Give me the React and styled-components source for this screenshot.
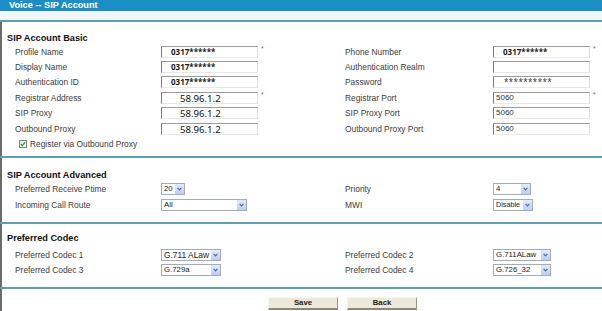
import React from "react";
import styled, { createGlobalStyle } from "styled-components";

const GlobalStyle = createGlobalStyle`
  html, body {
    margin: 0;
    padding: 0;
    background: #ffffff;
  }
  body {
    font-family: "Liberation Sans", Arial, sans-serif;
    overflow: hidden;
  }
`;

const Page = styled.div`
  width: 602px;
  height: 311px;
  overflow: hidden;
  background: #ffffff;
`;

const TitleBar = styled.div`
  height: 11px;
  background: #1c8ec6;
  color: #ffffff;
  font-weight: bold;
  font-size: 9.2px;
  line-height: 11px;
  padding-left: 9px;
`;

const TitleBand = styled.div`
  height: 9px;
  background: #f1f8fb;
`;

const Divider = styled.div`
  height: 2px;
  background: #5d9eb0;
`;

const Section = styled.section`
  border-left: 2px solid #6b6b6b;
  padding: ${(p) => p.$pt}px 0 ${(p) => p.$pb}px 5px;
`;

const SectionTitle = styled.h3`
  margin: 0 0 ${(p) => p.$gap || 0}px;
  font-size: 9.2px;
  line-height: 12px;
  font-weight: bold;
  color: #111111;
`;

const Fields = styled.div`
  display: grid;
  grid-template-columns: 146px 184px 148px 1fr;
  grid-auto-rows: ${(p) => p.$row}px;
  align-items: center;
  margin-left: 8px;
`;

const Label = styled.div`
  font-size: 8.4px;
  color: #3d3d3d;
  white-space: nowrap;
`;

const Field = styled.div`
  display: flex;
  align-items: center;
  gap: 3px;
`;

const fonts = {
  id: `font-family: "Noto Sans", sans-serif; font-weight: bold; font-size: 8px; padding-left: 9px; color: #1a1a1a;`,
  ip: `font-family: "Noto Sans", sans-serif; font-size: 9.6px; line-height: 11px; padding-left: 18px; color: #111;`,
  port: `font-family: "Liberation Sans", Arial, sans-serif; font-size: 8px; padding-left: 2px; color: #333;`,
  secret: `font-family: "Noto Sans", sans-serif; font-size: 8px; padding-left: 10px; letter-spacing: 0.4px; color: #333;`,
};

const TextBox = styled.div`
  width: 97px;
  height: 12px;
  box-sizing: border-box;
  border-style: solid;
  border-width: 1px;
  border-color: #9c9c9c #dedede #e8e8e8 #7c7c7c;
  background: #ffffff;
  line-height: 10px;
  white-space: nowrap;
  overflow: hidden;
  ${(p) => fonts[p.$kind || "port"]}
`;

const Required = styled.span`
  color: #c0504d;
  font-size: 7px;
  line-height: 7px;
  align-self: flex-start;
  margin-top: -1px;
`;

const CheckRow = styled.div`
  grid-column: 1 / -1;
  display: flex;
  align-items: center;
  gap: 3px;
  padding-left: 4px;
  font-size: 8.4px;
  color: #3d3d3d;
`;

const CheckBox = styled.span`
  width: 8px;
  height: 8px;
  box-sizing: border-box;
  border: 1px solid #7a8a99;
  background: linear-gradient(135deg, #e6e6e0, #ffffff);
  display: flex;
  align-items: center;
  justify-content: center;
`;

const Select = styled.div`
  width: ${(p) => p.$w}px;
  height: 12px;
  box-sizing: border-box;
  border: 1px solid #a3adb8;
  background: #ffffff;
  display: flex;
`;

const SelectText = styled.span`
  flex: 1;
  padding-left: 2px;
  font-size: ${(p) => p.$size || 7.8}px;
  line-height: 10px;
  color: #222222;
  white-space: nowrap;
  overflow: hidden;
`;

const SelectArrow = styled.span`
  width: 9px;
  flex: none;
  border-left: 1px solid #ffffff;
  background: linear-gradient(#e4ebfd, #bccdf5);
  display: flex;
  align-items: center;
  justify-content: center;
`;

const ButtonRow = styled.div`
  display: flex;
  gap: 9px;
  padding-left: 261px;
`;

const Button = styled.button`
  width: 70px;
  height: 13px;
  padding: 0;
  box-sizing: border-box;
  background: #ece9d8;
  border-style: solid;
  border-width: 1px 1px 2px 1px;
  border-color: #f7f6ef #9a9788 #8c897b #f7f6ef;
  font-family: "Liberation Sans", Arial, sans-serif;
  font-weight: bold;
  font-size: 7.8px;
  line-height: 10px;
  color: #222222;
`;

function Chevron() {
  return (
    <svg width="5" height="4" viewBox="0 0 5 4">
      <path d="M0.6 0.8 L2.5 2.8 L4.4 0.8" fill="none" stroke="#4a68a6" strokeWidth="1.2" />
    </svg>
  );
}

function Dropdown({ w, value, size }) {
  return (
    <Select $w={w}>
      <SelectText $size={size}>{value}</SelectText>
      <SelectArrow>
        <Chevron />
      </SelectArrow>
    </Select>
  );
}

function Input({ kind, value, required }) {
  return (
    <Field>
      <TextBox $kind={kind}>{value}</TextBox>
      {required && <Required>*</Required>}
    </Field>
  );
}

const basicRows = [
  ["Profile Name", { kind: "id", value: "0317******", required: true }, "Phone Number", { kind: "id", value: "0317******", required: true }],
  ["Display Name", { kind: "id", value: "0317******" }, "Authentication Realm", { kind: "port", value: "" }],
  ["Authentication ID", { kind: "id", value: "0317******" }, "Password", { kind: "secret", value: "**********" }],
  ["Registrar Address", { kind: "ip", value: "58.96.1.2", required: true }, "Registrar Port", { kind: "port", value: "5060", required: true }],
  ["SIP Proxy", { kind: "ip", value: "58.96.1.2" }, "SIP Proxy Port", { kind: "port", value: "5060" }],
  ["Outbound Proxy", { kind: "ip", value: "58.96.1.2" }, "Outbound Proxy Port", { kind: "port", value: "5060" }],
];

const advancedRows = [
  ["Preferred Receive Ptime", { w: 24, value: "20" }, "Priority", { w: 38, value: "4" }],
  ["Incoming Call Route", { w: 86, value: "All" }, "MWI", { w: 40, value: "Disable", size: 7.2 }],
];

const codecRows = [
  ["Preferred Codec 1", { w: 60, value: "G.711 ALaw", size: 8.4 }, "Preferred Codec 2", { w: 58, value: "G.711ALaw" }],
  ["Preferred Codec 3", { w: 60, value: "G.729a" }, "Preferred Codec 4", { w: 58, value: "G.726_32" }],
];

export default function App() {
  return (
    <Page>
      <GlobalStyle />
      <TitleBar>Voice -- SIP Account</TitleBar>
      <TitleBand />
      <Divider />

      <Section $pt={10} $pb={4}>
        <SectionTitle>SIP Account Basic</SectionTitle>
        <Fields $row={15.4}>
          {basicRows.map(([l1, f1, l2, f2]) => (
            <React.Fragment key={l1}>
              <Label>{l1}</Label>
              <Input {...f1} />
              <Label>{l2}</Label>
              <Input {...f2} />
            </React.Fragment>
          ))}
          <CheckRow>
            <CheckBox>
              <svg width="6" height="6" viewBox="0 0 6 6">
                <path d="M0.8 3 L2.4 4.6 L5.2 1.2" fill="none" stroke="#21a121" strokeWidth="1.2" />
              </svg>
            </CheckBox>
            Register via Outbound Proxy
          </CheckRow>
        </Fields>
      </Section>
      <Divider />

      <Section $pt={11} $pb={8.5}>
        <SectionTitle>SIP Account Advanced</SectionTitle>
        <Fields $row={16.5}>
          {advancedRows.map(([l1, s1, l2, s2]) => (
            <React.Fragment key={l1}>
              <Label>{l1}</Label>
              <Field><Dropdown {...s1} /></Field>
              <Label>{l2}</Label>
              <Field><Dropdown {...s2} /></Field>
            </React.Fragment>
          ))}
        </Fields>
      </Section>
      <Divider />

      <Section $pt={8} $pb={10}>
        <SectionTitle $gap={3}>Preferred Codec</SectionTitle>
        <Fields $row={15}>
          {codecRows.map(([l1, s1, l2, s2]) => (
            <React.Fragment key={l1}>
              <Label>{l1}</Label>
              <Field><Dropdown {...s1} /></Field>
              <Label>{l2}</Label>
              <Field><Dropdown {...s2} /></Field>
            </React.Fragment>
          ))}
        </Fields>
      </Section>
      <Divider />

      <Section $pt={8} $pb={20}>
        <ButtonRow>
          <Button>Save</Button>
          <Button>Back</Button>
        </ButtonRow>
      </Section>
    </Page>
  );
}
